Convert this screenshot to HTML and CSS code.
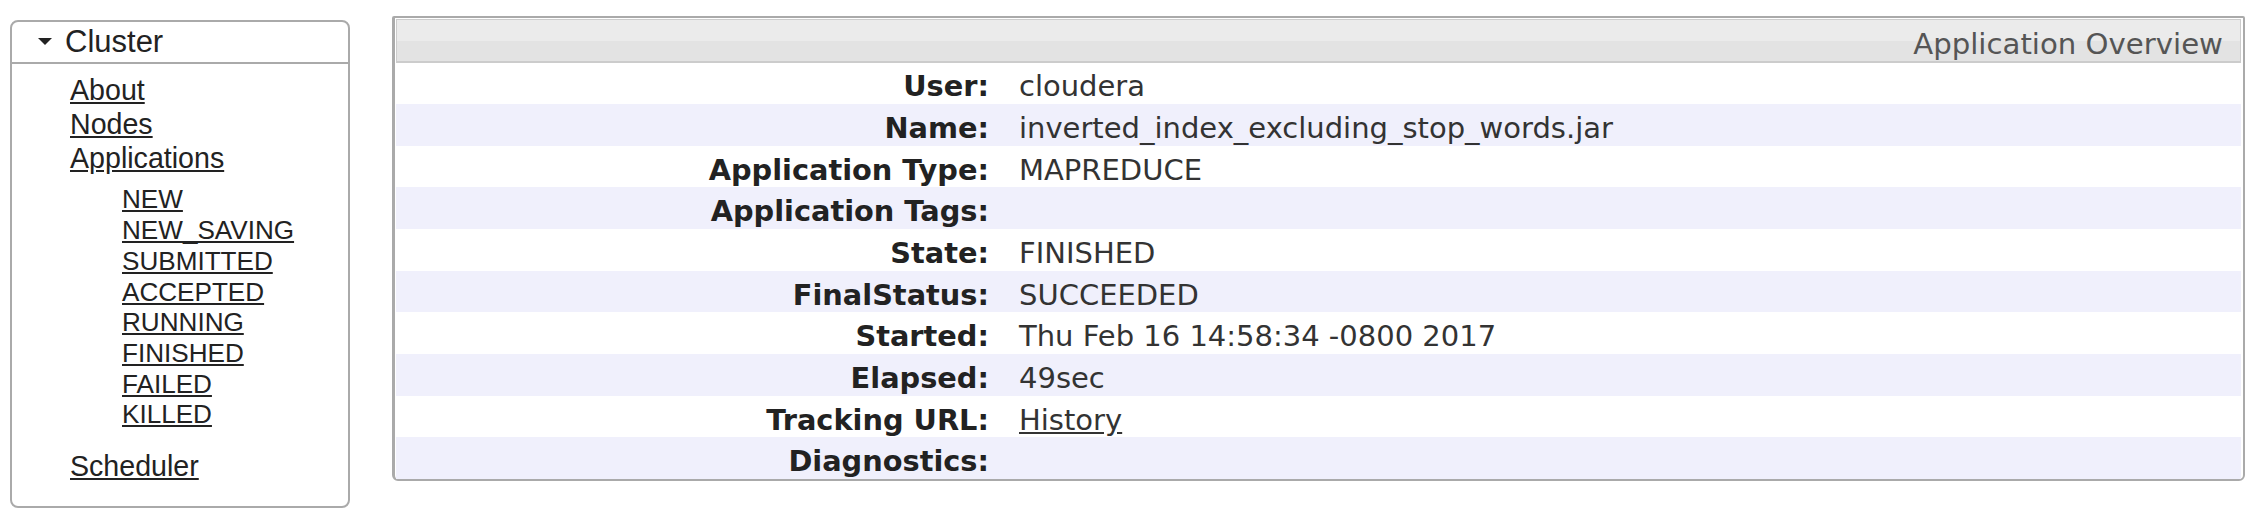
FILE: index.html
```html
<!DOCTYPE html>
<html>
<head>
<meta charset="utf-8">
<link rel="stylesheet" href="styles.css">
</head>
<body>
<div class="page">
  <nav class="nav">
    <div class="nav-head"><span class="tri"></span>Cluster</div>
    <div class="nav-body">
      <ul class="links">
        <li><a href="#">About</a></li>
        <li><a href="#">Nodes</a></li>
        <li><a href="#">Applications</a>
          <ul class="sub">
            <li><a href="#">NEW</a></li>
            <li><a href="#">NEW_SAVING</a></li>
            <li><a href="#">SUBMITTED</a></li>
            <li><a href="#">ACCEPTED</a></li>
            <li><a href="#">RUNNING</a></li>
            <li><a href="#">FINISHED</a></li>
            <li><a href="#">FAILED</a></li>
            <li><a href="#">KILLED</a></li>
          </ul>
        </li>
        <li class="sched"><a href="#">Scheduler</a></li>
      </ul>
    </div>
  </nav>
  <main class="overview">
    <div class="ov-head">Application Overview</div>
    <div class="info">
      <div class="row"><div class="lbl">User:</div><div class="val">cloudera</div></div>
      <div class="row"><div class="lbl">Name:</div><div class="val">inverted_index_excluding_stop_words.jar</div></div>
      <div class="row"><div class="lbl">Application Type:</div><div class="val">MAPREDUCE</div></div>
      <div class="row"><div class="lbl">Application Tags:</div><div class="val"></div></div>
      <div class="row"><div class="lbl">State:</div><div class="val">FINISHED</div></div>
      <div class="row"><div class="lbl">FinalStatus:</div><div class="val">SUCCEEDED</div></div>
      <div class="row"><div class="lbl">Started:</div><div class="val">Thu Feb 16 14:58:34 -0800 2017</div></div>
      <div class="row"><div class="lbl">Elapsed:</div><div class="val">49sec</div></div>
      <div class="row"><div class="lbl">Tracking URL:</div><div class="val"><a href="#">History</a></div></div>
      <div class="row"><div class="lbl">Diagnostics:</div><div class="val"></div></div>
    </div>
  </main>
</div>
</body>
</html>
```
FILE: styles.css
```css
html, body {
  margin: 0;
  padding: 0;
  background: #fff;
}
.page {
  display: flex;
  align-items: flex-start;
  padding: 16px 0 0 10px;
}
.nav {
  box-sizing: border-box;
  width: 340px;
  height: 488px;
  margin-top: 4px;
  border: 2px solid #aaa;
  border-radius: 8px;
  font-family: "Liberation Sans", Arial, sans-serif;
  color: #222;
}
.nav-head {
  box-sizing: border-box;
  height: 42px;
  border-bottom: 2px solid #aaa;
  font-size: 31px;
  line-height: 36px;
  padding-top: 2px;
  padding-left: 53px;
  position: relative;
}
.tri {
  position: absolute;
  left: 26px;
  top: 16px;
  width: 0;
  height: 0;
  border-left: 7px solid transparent;
  border-right: 7px solid transparent;
  border-top: 7px solid #222;
}
.nav-body {
  padding: 10px 0 0 58px;
}
.links, .sub {
  list-style: none;
  margin: 0;
  padding: 0;
}
.links > li {
  font-size: 28.6px;
  line-height: 33.8px;
}
.links a {
  color: #222;
  text-decoration: underline;
}
.sub {
  padding-left: 52px;
  padding-top: 9px;
}
.sub li {
  font-size: 26.1px;
  line-height: 30.7px;
}
.sched {
  margin-top: 20px;
}
.overview {
  box-sizing: border-box;
  margin-left: 42px;
  width: 1853px;
  border: 2px solid #aaa;
  border-left-width: 3px;
  border-radius: 2px 2px 6px 6px;
  padding: 1px 2px 0 1px;
  font-family: "DejaVu Sans", Verdana, sans-serif;
}
.ov-head {
  box-sizing: border-box;
  height: 43.5px;
  border: 1px solid #ccc;
  border-width: 1px 1px 2px 1px;
  background: linear-gradient(#ebebeb 0, #ebebeb 50%, #e3e3e3 50%, #e3e3e3 100%);
  color: #555;
  font-size: 29.2px;
  line-height: 42px;
  padding-top: 3px;
  text-align: right;
  padding-right: 17px;
  white-space: nowrap;
}
.info {
  display: flex;
  flex-direction: column;
}
.row {
  box-sizing: border-box;
  display: grid;
  grid-template-columns: 593px 1fr;
  height: 41.67px;
  padding-top: 6px;
  align-items: center;
  font-size: 28.8px;
  line-height: 34px;
}
.row:nth-child(even) {
  background: #f0f0fc;
}
.lbl {
  font-weight: bold;
  color: #222;
  text-align: right;
  white-space: nowrap;
}
.val {
  color: #333;
  font-size: 29px;
  padding-left: 30px;
  white-space: nowrap;
}
.val a {
  color: #333;
  text-decoration: underline;
}
```
